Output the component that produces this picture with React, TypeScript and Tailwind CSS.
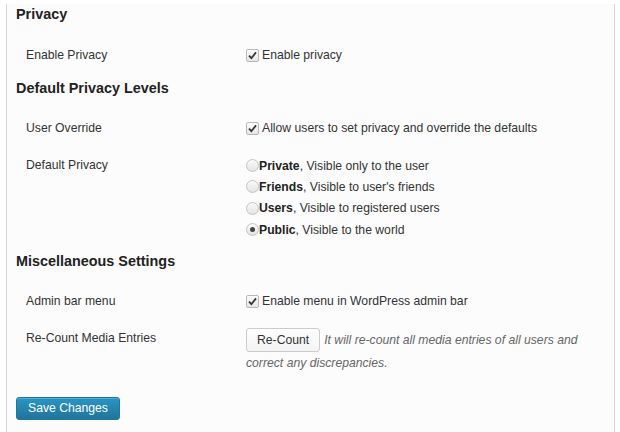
const Check = () => (
  <span className="inline-flex h-[13px] w-[13px] shrink-0 items-center justify-center rounded-[2px] border border-[#b4b9be] bg-gradient-to-b from-[#fdfdfd] to-[#e6e6e6]">
    <svg width="9" height="9" viewBox="0 0 9 9">
      <path d="M1 4.6 L3.4 7.2 L8 1.4" fill="none" stroke="#333" strokeWidth="1.8" />
    </svg>
  </span>
);

const Radio = ({ on }: { on?: boolean }) => (
  <span className="inline-flex h-[13px] w-[13px] shrink-0 items-center justify-center rounded-full border border-[#c4c4c4] bg-gradient-to-b from-[#fafafa] to-[#e4e4e4]">
    {on && <span className="h-[5px] w-[5px] rounded-full bg-[#444]" />}
  </span>
);

const Row = ({
  label,
  className,
  children,
}: {
  label: string;
  className: string;
  children: React.ReactNode;
}) => (
  <div className={`flex ${className}`}>
    <div className="w-[230px] shrink-0 pl-[10px] leading-[20px] text-[#333]">{label}</div>
    <div className="flex-1 leading-[20px]">{children}</div>
  </div>
);

const options = [
  { name: "Private", desc: "Visible only to the user" },
  { name: "Friends", desc: "Visible to user's friends" },
  { name: "Users", desc: "Visible to registered users" },
  { name: "Public", desc: "Visible to the world", on: true },
];

export default function App() {
  return (
    <div
      className="h-[432px] w-[620px] overflow-hidden bg-white pl-[6px] pr-[5px] text-[12.2px] text-[#333]"
      style={{ fontFamily: '"Liberation Sans", Arial, sans-serif' }}
    >
      <div className="h-full border-x border-[#d4d4d4] bg-[#fcfcfc] pl-[9px] pr-[10px]">
        <h2 className="mt-[4px] text-[14.4px] font-bold leading-[20px] text-[#222]">Privacy</h2>
        <Row label="Enable Privacy" className="mt-[21px]">
          <label className="flex items-center gap-[3px]">
            <Check />
            <span>Enable privacy</span>
          </label>
        </Row>

        <h2 className="mt-[13px] text-[14.4px] font-bold leading-[20px] text-[#222]">
          Default Privacy Levels
        </h2>
        <Row label="User Override" className="mt-[20px]">
          <label className="flex items-center gap-[3px]">
            <Check />
            <span>Allow users to set privacy and override the defaults</span>
          </label>
        </Row>
        <Row label="Default Privacy" className="mt-[17px]">
          <div className="flex flex-col">
            {options.map((o) => (
              <label key={o.name} className="flex h-[21.3px] items-center">
                <Radio on={o.on} />
                <span>
                  <b className="text-[#222]">{o.name}</b>, {o.desc}
                </span>
              </label>
            ))}
          </div>
        </Row>

        <h2 className="mt-[11px] text-[14.4px] font-bold leading-[20px] text-[#222]">
          Miscellaneous Settings
        </h2>
        <Row label="Admin bar menu" className="mt-[20px]">
          <label className="flex items-center gap-[3px]">
            <Check />
            <span>Enable menu in WordPress admin bar</span>
          </label>
        </Row>
        <Row label="Re-Count Media Entries" className="mt-[17px]">
          <div className="leading-[20px]">
            <button className="mr-[4px] inline-block h-[24px] rounded-[3px] border border-[#ccc] bg-gradient-to-b from-[#fefefe] to-[#f4f4f4] px-[10px] align-middle text-[12.2px] leading-[22px] text-[#333]">
              Re-Count
            </button>
            <span className="align-middle italic text-[#666]">
              It will re-count all media entries of all users and correct any discrepancies.
            </span>
          </div>
        </Row>

        <button className="mt-[24px] h-[23px] w-[104px] rounded-[3px] border border-[#21759b] bg-gradient-to-b from-[#2a95c5] to-[#21759b] text-[12.2px] leading-[20px] text-white shadow-[inset_0_1px_0_rgba(120,200,230,0.5)]">
          Save Changes
        </button>
      </div>
    </div>
  );
}
